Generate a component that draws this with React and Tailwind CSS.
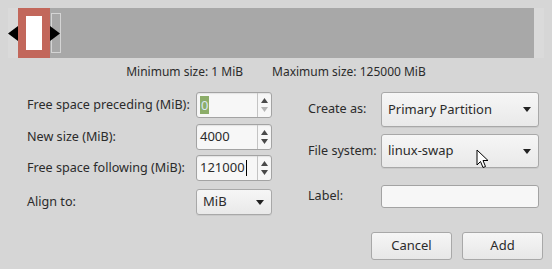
import React from "react";

const font = { fontFamily: '"Noto Sans", "Open Sans", sans-serif' };

function Arrow({ up, disabled }) {
  const color = disabled ? "#b4b4b4" : "#4a4a4a";
  return (
    <svg width="7" height="5" viewBox="0 0 7 5">
      {up ? <polygon points="3.5,0 7,5 0,5" fill={color} /> : <polygon points="0,0 7,0 3.5,5" fill={color} />}
    </svg>
  );
}

function SpinBox({ children, downDisabled }) {
  return (
    <div className="flex h-full w-[76px] rounded-[3px] border border-[#a3a3a3] bg-[#f7f7f7] shadow-[inset_0_1px_1px_rgba(0,0,0,0.08)]">
      <div className="flex flex-1 items-center pl-[3px] text-[13px] text-[#2b2b2b]">{children}</div>
      <div className="flex w-[14px] flex-col items-center justify-center gap-[4px] border-l border-[#c4c4c4]">
        <Arrow up />
        <Arrow disabled={downDisabled} />
      </div>
    </div>
  );
}

function Combo({ children, className }) {
  return (
    <div className={"flex items-center justify-between rounded-[3px] border border-[#a8a8a8] bg-gradient-to-b from-[#f6f6f6] to-[#e9e9e9] pl-[6px] pr-[7px] text-[13px] text-[#2b2b2b] shadow-[0_1px_0_rgba(0,0,0,0.06)] " + className}>
      <span>{children}</span>
      <svg width="8" height="5" viewBox="0 0 8 5">
        <polygon points="0,0 8,0 4,5" fill="#222" />
      </svg>
    </div>
  );
}

function Button({ children }) {
  return (
    <div className="flex h-[28px] w-[81px] items-center justify-center rounded-[3px] border border-[#a8a8a8] bg-gradient-to-b from-[#f6f6f6] to-[#e7e7e7] text-[13px] text-[#2b2b2b]">
      {children}
    </div>
  );
}

export default function App() {
  return (
    <div className="h-[269px] w-[552px] overflow-hidden bg-[#d6d6d6]" style={font}>
      {/* partition graphic */}
      <div className="px-[8px] pt-[8px]">
        <div className="relative flex h-[50px] bg-[#dadada] px-[10px]">
          <div className="relative w-[32px] bg-[#c2675b]">
            <div className="absolute left-[8px] top-[8px] h-[34px] w-[16px] bg-white" />
          </div>
          <div className="relative flex-1 bg-[#a8a8a8]">
            <div className="absolute left-[1px] top-[5px] h-[40px] w-[10px] border border-[#d4d4d4]" />
          </div>
          <svg className="absolute left-0 top-[18px]" width="10" height="15" viewBox="0 0 10 15">
            <polygon points="10,0 0,7.5 10,15" fill="#000" />
          </svg>
          <svg className="absolute left-[42px] top-[18px]" width="10" height="15" viewBox="0 0 10 15">
            <polygon points="0,0 10,7.5 0,15" fill="#000" />
          </svg>
        </div>
      </div>

      <div className="mt-[5px] flex justify-center gap-[29px] text-[12px] leading-[18px] text-[#2b2b2b]">
        <span>Minimum size: 1 MiB</span>
        <span>Maximum size: 125000 MiB</span>
      </div>

      <div className="mt-[11px] flex">
        {/* left column */}
        <div className="ml-[27px] flex w-[245px] flex-col text-[12.6px] text-[#2b2b2b]">
          <div className="flex h-[26px] items-center justify-between">
            <span>Free space preceding (MiB):</span>
            <SpinBox downDisabled>
              <span className="bg-[#8cad69] px-[1px] leading-[18px] text-[#dbe7f3]">0</span>
            </SpinBox>
          </div>
          <div className="mt-[6px] flex h-[26px] items-center justify-between">
            <span>New size (MiB):</span>
            <SpinBox>4000</SpinBox>
          </div>
          <div className="mt-[5px] flex h-[26px] items-center justify-between">
            <span>Free space following (MiB):</span>
            <SpinBox>
              <span>121000</span>
              <span className="ml-[1px] inline-block h-[16px] w-[1px] bg-black" />
            </SpinBox>
          </div>
          <div className="mt-[8px] flex h-[26px] items-center justify-between">
            <span>Align to:</span>
            <Combo className="h-[26px] w-[76px]">MiB</Combo>
          </div>
        </div>

        {/* right column */}
        <div className="ml-[36px] flex w-[231px] flex-col text-[12.6px] text-[#2b2b2b]">
          <div className="flex h-[35px] items-center justify-between">
            <span>Create as:</span>
            <Combo className="h-[35px] w-[158px]">Primary Partition</Combo>
          </div>
          <div className="relative mt-[7px] flex h-[34px] items-center justify-between">
            <span>File system:</span>
            <Combo className="h-[34px] w-[158px]">linux-swap</Combo>
            <svg className="absolute left-[168px] top-[15px]" width="13" height="20" viewBox="0 0 13 20">
              <path d="M1 1 L1 16 L4.5 12.5 L7 18.5 L9.5 17.5 L7 11.5 L12 11.5 Z" fill="#fff" stroke="#000" strokeWidth="1" strokeLinejoin="miter" />
            </svg>
          </div>
          <div className="mt-[17px] flex h-[23px] items-center justify-between">
            <span>Label:</span>
            <div className="h-[23px] w-[158px] rounded-[3px] border border-[#a3a3a3] bg-[#f7f7f7]" />
          </div>
        </div>
      </div>

      <div className="mt-[17px] flex justify-end gap-[10px] pr-[9px]">
        <Button>Cancel</Button>
        <Button>Add</Button>
      </div>
    </div>
  );
}
